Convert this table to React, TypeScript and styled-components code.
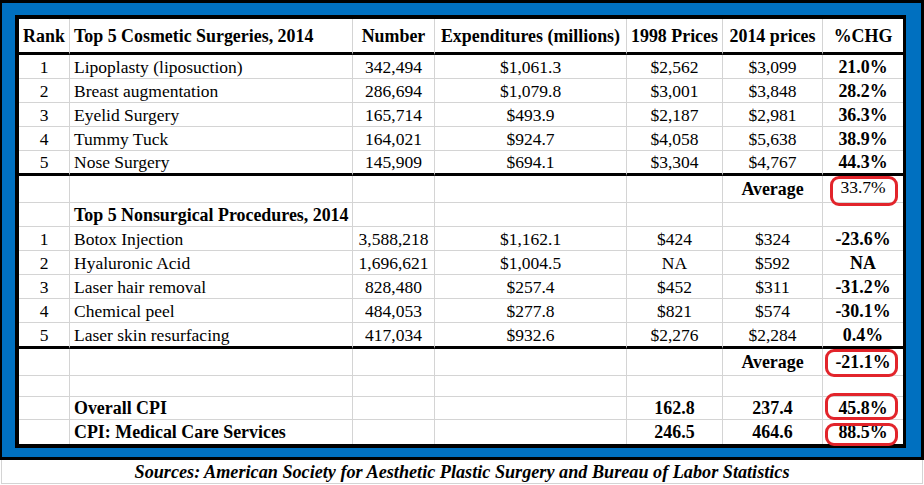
import React from "react";
import styled, { createGlobalStyle } from "styled-components";

const Global = createGlobalStyle`
  html, body { margin: 0; padding: 0; background: #fff; }
  body { font-family: "Liberation Serif", "Times New Roman", serif; color: #000; }
`;

const Page = styled.div`
  width: 924px;
  height: 485px;
  overflow: hidden;
  background: #fff;
  font-family: "Liberation Serif", "Times New Roman", serif;
`;

const Frame = styled.div`
  box-sizing: border-box;
  width: 924px;
  background: #0070c0;
  border-style: solid;
  border-color: #000;
  border-width: 3px 3px 3px 2px;
  padding: 12px 15px 9px 13px;
`;

const TableBox = styled.div`
  background: #fff;
  border-style: solid;
  border-color: #000;
  border-width: 4px 3px 4px 4px;
`;

const Table = styled.table`
  width: 884px;
  table-layout: fixed;
  border-collapse: separate;
  border-spacing: 0;
  font-family: "Liberation Serif", "Times New Roman", serif;
  font-size: 17.5px;
  line-height: 20px;
  color: #000;
`;

const Row = styled.tr<{ $h: number }>`
  height: ${(p) => p.$h}px;
`;

type Align = "left" | "center";

const Cell = styled.td<{
  $align?: Align;
  $bold?: boolean;
  $rule?: "thin" | "thick" | "none";
  $h: number;
  $last?: boolean;
}>`
  box-sizing: border-box;
  height: ${(p) => p.$h}px;
  padding: 0;
  padding-left: ${(p) => (p.$align === "left" ? "4px" : "0")};
  text-align: ${(p) => p.$align || "center"};
  font-weight: ${(p) => (p.$bold ? 700 : 400)};
  font-size: ${(p) => (p.$bold ? "17.9px" : "17.5px")};
  white-space: nowrap;
  overflow: visible;
  vertical-align: middle;
  border-right: ${(p) => (p.$last ? "none" : "1px solid #d4d4d4")};
  border-bottom: ${(p) =>
    p.$rule === "thick"
      ? "3px solid #000"
      : p.$rule === "none"
      ? "none"
      : "1px solid #d4d4d4"};
  position: relative;
`;

const Lifted = styled.span`
  position: relative;
  top: -2px;
`;

const RedBox = styled.div<{ $t: number; $b: number; $l: number; $r: number }>`
  position: absolute;
  top: ${(p) => p.$t}px;
  bottom: ${(p) => p.$b}px;
  left: ${(p) => p.$l}px;
  right: ${(p) => p.$r}px;
  border: 3px solid #e2242b;
  border-radius: 9px;
  z-index: 2;
  pointer-events: none;
`;

const Source = styled.div`
  box-sizing: border-box;
  width: 922px;
  height: 24px;
  border-bottom: 1px solid #d4d4d4;
  border-left: 1px solid #d4d4d4;
  border-right: 1px solid #d4d4d4;
  margin-left: 1px;
  text-align: center;
  font-family: "Liberation Serif", "Times New Roman", serif;
  font-size: 18.2px;
  line-height: 24px;
  font-weight: 700;
  font-style: italic;
`;

const widths = [51, 283, 82, 192, 96, 100, 80];

type Data = [string, string, string, string, string, string, string];

const surgeries: Data[] = [
  ["1", "Lipoplasty (liposuction)", "342,494", "$1,061.3", "$2,562", "$3,099", "21.0%"],
  ["2", "Breast augmentation", "286,694", "$1,079.8", "$3,001", "$3,848", "28.2%"],
  ["3", "Eyelid Surgery", "165,714", "$493.9", "$2,187", "$2,981", "36.3%"],
  ["4", "Tummy Tuck", "164,021", "$924.7", "$4,058", "$5,638", "38.9%"],
  ["5", "Nose Surgery", "145,909", "$694.1", "$3,304", "$4,767", "44.3%"],
];

const nonsurgical: Data[] = [
  ["1", "Botox Injection", "3,588,218", "$1,162.1", "$424", "$324", "-23.6%"],
  ["2", "Hyaluronic Acid", "1,696,621", "$1,004.5", "NA", "$592", "NA"],
  ["3", "Laser hair removal", "828,480", "$257.4", "$452", "$311", "-31.2%"],
  ["4", "Chemical peel", "484,053", "$277.8", "$821", "$574", "-30.1%"],
  ["5", "Laser skin resurfacing", "417,034", "$932.6", "$2,276", "$2,284", "0.4%"],
];

function DataRow({ d, h, rule }: { d: Data; h: number; rule: "thin" | "thick" }) {
  return (
    <Row $h={h}>
      <Cell $h={h} $rule={rule}>{d[0]}</Cell>
      <Cell $h={h} $rule={rule} $align="left">{d[1]}</Cell>
      <Cell $h={h} $rule={rule}>{d[2]}</Cell>
      <Cell $h={h} $rule={rule}>{d[3]}</Cell>
      <Cell $h={h} $rule={rule}>{d[4]}</Cell>
      <Cell $h={h} $rule={rule}>{d[5]}</Cell>
      <Cell $h={h} $rule={rule} $bold $last>{d[6]}</Cell>
    </Row>
  );
}

function Blank({ n, h, rule = "thin" }: { n: number; h: number; rule?: "thin" | "thick" | "none" }) {
  return (
    <>
      {Array.from({ length: n }).map((_, i) => (
        <Cell key={i} $h={h} $rule={rule} />
      ))}
    </>
  );
}

export default function App() {
  return (
    <Page>
      <Global />
      <Frame>
        <TableBox>
          <Table>
            <colgroup>
              {widths.map((w, i) => (
                <col key={i} style={{ width: w }} />
              ))}
            </colgroup>
            <tbody>
              <Row $h={36}>
                <Cell $h={36} $rule="thick" $bold>Rank</Cell>
                <Cell $h={36} $rule="thick" $bold $align="left">Top 5 Cosmetic Surgeries, 2014</Cell>
                <Cell $h={36} $rule="thick" $bold>Number</Cell>
                <Cell $h={36} $rule="thick" $bold>Expenditures (millions)</Cell>
                <Cell $h={36} $rule="thick" $bold>1998 Prices</Cell>
                <Cell $h={36} $rule="thick" $bold>2014 prices</Cell>
                <Cell $h={36} $rule="thick" $bold $last>%CHG</Cell>
              </Row>
              {surgeries.map((d, i) => (
                <DataRow key={d[1]} d={d} h={i === 4 ? 25 : 24} rule={i === 4 ? "thick" : "thin"} />
              ))}
              <Row $h={27}>
                <Blank n={5} h={27} />
                <Cell $h={27} $bold>Average</Cell>
                <Cell $h={27} $last>
                  <Lifted>33.7%</Lifted>
                  <RedBox $t={0} $b={-4} $l={7} $r={5} />
                </Cell>
              </Row>
              <Row $h={24}>
                <Cell $h={24} />
                <Cell $h={24} $bold $align="left">Top 5 Nonsurgical Procedures, 2014</Cell>
                <Blank n={4} h={24} />
                <Cell $h={24} $last />
              </Row>
              {nonsurgical.map((d, i) => (
                <DataRow key={d[1]} d={d} h={i === 4 ? 26 : 24} rule={i === 4 ? "thick" : "thin"} />
              ))}
              <Row $h={27}>
                <Blank n={5} h={27} />
                <Cell $h={27} $bold>Average</Cell>
                <Cell $h={27} $bold $last>
                  -21.1%
                  <RedBox $t={0} $b={-2} $l={2} $r={5} />
                </Cell>
              </Row>
              <Row $h={21}>
                <Blank n={6} h={21} />
                <Cell $h={21} $last />
              </Row>
              <Row $h={23}>
                <Cell $h={23} />
                <Cell $h={23} $bold $align="left">Overall CPI</Cell>
                <Blank n={2} h={23} />
                <Cell $h={23} $bold>162.8</Cell>
                <Cell $h={23} $bold>237.4</Cell>
                <Cell $h={23} $bold $last>
                  45.8%
                  <RedBox $t={-4} $b={-1} $l={2} $r={5} />
                </Cell>
              </Row>
              <Row $h={24}>
                <Cell $h={24} $rule="none" />
                <Cell $h={24} $rule="none" $bold $align="left">CPI: Medical Care Services</Cell>
                <Blank n={2} h={24} rule="none" />
                <Cell $h={24} $rule="none" $bold>246.5</Cell>
                <Cell $h={24} $rule="none" $bold>464.6</Cell>
                <Cell $h={24} $rule="none" $bold $last>
                  88.5%
                  <RedBox $t={3} $b={-2} $l={2} $r={5} />
                </Cell>
              </Row>
            </tbody>
          </Table>
        </TableBox>
      </Frame>
      <Source>Sources: American Society for Aesthetic Plastic Surgery and Bureau of Labor Statistics</Source>
    </Page>
  );
}
